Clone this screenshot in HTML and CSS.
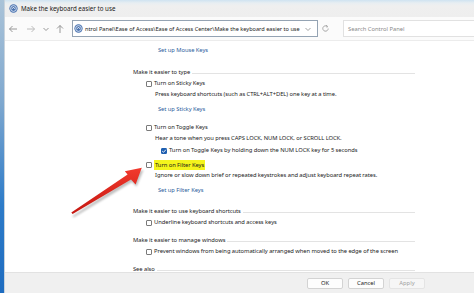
FILE: index.html
```html
<!DOCTYPE html>
<html>
<head>
<meta charset="utf-8">
<link rel="stylesheet" href="styles.css">
</head>
<body>
<div class="desk"></div>
<div class="window">
  <div class="titlebar">
    <svg class="appicon" width="9" height="9" viewBox="0 0 10 10"><circle cx="5" cy="5" r="4.6" fill="#4a73b0"/><circle cx="5" cy="5" r="3.2" fill="none" stroke="#dfe8f5" stroke-width="1"/><path d="M3.3 5.4 L5 3.6 L6.7 5.4" fill="none" stroke="#ffffff" stroke-width="1"/></svg>
    <span class="title">Make the keyboard easier to use</span>
  </div>
  <div class="navbar">
    <svg class="nav back" width="10" height="10" viewBox="0 0 10 10"><path d="M9 5 H1.5 M4.5 2 L1.5 5 L4.5 8" fill="none" stroke="#8c8c8c" stroke-width="0.9"/></svg>
    <svg class="nav fwd" width="10" height="10" viewBox="0 0 10 10"><path d="M1 5 H8.5 M5.5 2 L8.5 5 L5.5 8" fill="none" stroke="#b4b4b4" stroke-width="0.9"/></svg>
    <svg class="nav down" width="8" height="8" viewBox="0 0 8 8"><path d="M1.5 3 L4 5.5 L6.5 3" fill="none" stroke="#8c8c8c" stroke-width="0.9"/></svg>
    <svg class="nav up" width="10" height="10" viewBox="0 0 10 10"><path d="M5 9 V1.5 M2 4.5 L5 1.5 L8 4.5" fill="none" stroke="#8c8c8c" stroke-width="0.9"/></svg>
    <div class="address">
      <svg class="addricon" width="9" height="9" viewBox="0 0 10 10"><circle cx="5" cy="5" r="4.6" fill="#4a73b0"/><circle cx="5" cy="5" r="3.2" fill="none" stroke="#dfe8f5" stroke-width="1"/><path d="M3.3 5.4 L5 3.6 L6.7 5.4" fill="none" stroke="#ffffff" stroke-width="1"/></svg>
      <span class="path">ntrol Panel\Ease of Access\Ease of Access Center\Make the keyboard easier to use</span>
      <svg class="chev" width="8" height="8" viewBox="0 0 8 8"><path d="M1.5 3 L4 5.5 L6.5 3" fill="none" stroke="#8c8c8c" stroke-width="0.8"/></svg>
    </div>
    <svg class="refresh" width="9" height="9" viewBox="0 0 10 10"><path d="M8 5 A3 3 0 1 1 6.8 2.6" fill="none" stroke="#8c8c8c" stroke-width="0.8"/><path d="M5.6 1.6 L7.2 2.4 L6.6 4" fill="none" stroke="#8c8c8c" stroke-width="0.8"/></svg>
    <div class="search">Search Control Panel</div>
  </div>
  <div class="content">
    <div class="link mouse">Set up Mouse Keys</div>

    <div class="section s-type">
      <div class="hdr"><span>Make it easier to type</span><i class="rule"></i></div>
      <div class="cbrow"><span class="cb"></span><span>Turn on Sticky Keys</span></div>
      <div class="desc">Press keyboard shortcuts (such as CTRL+ALT+DEL) one key at a time.</div>
      <div class="link sub">Set up Sticky Keys</div>
      <div class="cbrow gap7"><span class="cb"></span><span>Turn on Toggle Keys</span></div>
      <div class="desc">Hear a tone when you press CAPS LOCK, NUM LOCK, or SCROLL LOCK.</div>
      <div class="cbrow nested"><span class="cb checked"><svg width="6" height="6" viewBox="0 0 6 6"><path d="M1.2 3.1 L2.5 4.3 L4.9 1.7" fill="none" stroke="#fff" stroke-width="0.9"/></svg></span><span>Turn on Toggle Keys by holding down the NUM LOCK key for 5 seconds</span></div>
      <div class="cbrow gap4"><span class="cb"></span><span class="hl">Turn on Filter Keys</span></div>
      <div class="desc">Ignore or slow down brief or repeated keystrokes and adjust keyboard repeat rates.</div>
      <div class="link sub">Set up Filter Keys</div>
    </div>

    <div class="section s-short">
      <div class="hdr"><span>Make it easier to use keyboard shortcuts</span><i class="rule"></i></div>
      <div class="cbrow"><span class="cb"></span><span>Underline keyboard shortcuts and access keys</span></div>
    </div>

    <div class="section s-win">
      <div class="hdr"><span>Make it easier to manage windows</span><i class="rule"></i></div>
      <div class="cbrow"><span class="cb"></span><span>Prevent windows from being automatically arranged when moved to the edge of the screen</span></div>
    </div>

    <div class="section s-see">
      <div class="hdr"><span>See also</span><i class="rule"></i></div>
    </div>
  </div>
  <div class="footer">
    <div class="btn">OK</div>
    <div class="btn">Cancel</div>
    <div class="btn disabled">Apply</div>
  </div>
</div>
<svg class="arrow" width="474" height="293" viewBox="0 0 474 293">
  <defs>
    <filter id="sh" x="-20%" y="-20%" width="140%" height="140%"><feGaussianBlur stdDeviation="1.2"/></filter>
    <linearGradient id="rg" x1="0" y1="0" x2="0" y2="1"><stop offset="0" stop-color="#f23a2e"/><stop offset="1" stop-color="#c5160f"/></linearGradient>
  </defs>
  <polygon points="72.5,216 129,178.5 128,174 143.5,170 136.5,186.5 132,182 73.5,217.5" fill="#000" opacity="0.25" filter="url(#sh)"/>
  <polygon points="71.3,212.6 127.6,174.6 124.8,171.2 141.8,167.8 135.6,184.6 131,179.4 72.6,214" fill="url(#rg)"/>
</svg>
</body>
</html>
```
FILE: styles.css
```css
html, body {
  margin: 0;
  padding: 0;
}
body {
  width: 474px;
  height: 293px;
  overflow: hidden;
  display: flex;
  position: relative;
  font-family: "Noto Sans", "Open Sans", sans-serif;
  color: #1b1b1b;
  background: #ffffff;
}
.desk {
  width: 4px;
  flex: none;
  background: linear-gradient(#aac3d8 0, #7fa8cf 35%, #2d7bc8 70%, #1e6cc0 100%);
}
.window {
  flex: 1;
  display: flex;
  flex-direction: column;
  min-width: 0;
  border-left: 1px solid #c9d3dc;
}
.titlebar {
  height: 17px;
  flex: none;
  display: flex;
  align-items: center;
  padding-left: 2px;
  background: linear-gradient(#cfe3f1 0, #e8eef2 3px, #efefef 6px, #eeeeee 100%);
}
.appicon { margin-left: 2px; margin-right: 3px; }
.title { font-size: 6.2px; color: #202020; }
.navbar {
  height: 23px;
  flex: none;
  display: flex;
  align-items: center;
  background: #fbfbfb;
  border-bottom: 1px solid #ececec;
}
.nav { flex: none; }
.back { margin-left: 3px; }
.fwd { margin-left: 8px; }
.down { margin-left: 6px; }
.up { margin-left: 5px; }
.address {
  margin-left: 7px;
  width: 246px;
  height: 17px;
  flex: none;
  box-sizing: border-box;
  border: 1px solid #94a3b3;
  background: #ffffff;
  display: flex;
  align-items: center;
}
.addricon { margin-left: 1px; margin-right: 2px; flex: none; }
.path { font-size: 5.6px; white-space: nowrap; color: #1b1b1b; flex: none; }
.chev { margin-left: auto; margin-right: 5px; flex: none; }
.refresh { margin-left: 3px; flex: none; }
.search {
  margin-left: 13px;
  flex: 1;
  height: 17px;
  box-sizing: border-box;
  border: 1px solid #e1e1e1;
  border-right: none;
  background: #ffffff;
  font-size: 5.8px;
  color: #8a8a8a;
  display: flex;
  align-items: center;
  padding-left: 4px;
}
.content {
  flex: 1;
  overflow: hidden;
  background: #ffffff;
  padding: 4px 0 0 128px;
  font-size: 5.8px;
  letter-spacing: -0.06px;
  line-height: 11px;
}
.link { color: #2c5d9c; white-space: nowrap; }
.mouse { margin-left: 25px; }
.section { width: 282px; }
.s-type { margin-top: 11px; }
.s-short { margin-top: 10px; }
.s-win { margin-top: 7px; }
.s-see { margin-top: 7px; }
.hdr {
  display: flex;
  align-items: center;
  white-space: nowrap;
}
.rule {
  flex: 1;
  height: 1px;
  background: #e3e3e3;
  margin-left: 2px;
  margin-top: 2px;
}
.cbrow {
  display: flex;
  align-items: center;
  margin-left: 13px;
  white-space: nowrap;
}
.cb {
  width: 6px;
  height: 6px;
  box-sizing: border-box;
  border: 1px solid #7a7a7a;
  border-radius: 1px;
  margin-right: 2px;
  flex: none;
  background: #fff;
  display: flex;
}
.cb.checked {
  background: #1f5fb0;
  border-color: #1f5fb0;
}
.cb.checked svg { margin: -1px; }
.nested { margin-left: 28px; margin-top: 1px; }
.gap7 { margin-top: 7px; }
.gap4 { margin-top: 4px; }
.hl {
  background: #f4f41c;
  padding: 0 1px;
  line-height: 10px;
}
.desc { margin-left: 22px; white-space: nowrap; }
.sub { margin-left: 25px; margin-top: 4px; }
.footer {
  height: 21px;
  flex: none;
  box-sizing: border-box;
  background: #f0f0f0;
  border-top: 1px solid #e2e2e2;
  display: flex;
  align-items: center;
  padding-left: 302px;
  gap: 5px;
}
.btn {
  width: 36px;
  height: 11px;
  box-sizing: border-box;
  background: #fdfdfd;
  border: 1px solid #d3d3d3;
  border-radius: 2px;
  font-size: 5.8px;
  display: flex;
  align-items: center;
  justify-content: center;
  color: #1b1b1b;
}
.btn.disabled {
  background: #f6f6f6;
  border-color: #e4e4e4;
  color: #a0a0a0;
}
.arrow {
  position: absolute;
  left: 0;
  top: 0;
  pointer-events: none;
}
```
